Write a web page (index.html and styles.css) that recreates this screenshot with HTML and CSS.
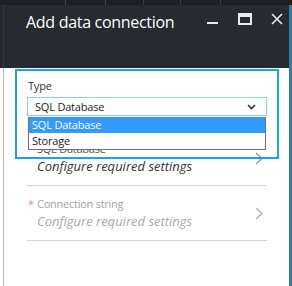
FILE: index.html
```html
<!DOCTYPE html>
<html>
<head>
<meta charset="utf-8">
<link rel="stylesheet" href="styles.css">
</head>
<body>
<div class="screen">
  <div class="topstrip">
    <span class="seg s1"></span><span class="seg s2"></span><span class="seg s3"></span><span class="seg s4"></span><span class="seg s5"></span><span class="seg s6"></span>
  </div>
  <div class="frame">
    <div class="blade">
      <div class="header">
        <div class="title">Add data connection</div>
        <div class="controls">
          <svg class="ctl" width="12" height="12" viewBox="0 0 12 12"><rect x="0" y="9" width="11" height="2" fill="#e8eaec"/></svg>
          <svg class="ctl" width="14" height="12" viewBox="0 0 14 12"><rect x="1" y="1" width="12" height="10" fill="none" stroke="#e8eaec" stroke-width="2"/><rect x="1" y="1" width="12" height="3" fill="#e8eaec"/></svg>
          <svg class="ctl" width="12" height="12" viewBox="0 0 12 12"><path d="M1 1 L11 11 M11 1 L1 11" stroke="#e8eaec" stroke-width="1.6" fill="none"/></svg>
        </div>
      </div>
      <div class="body">
        <div class="content">
          <div class="field">
            <div class="flabel">Type</div>
            <div class="select">
              <span>SQL Database</span>
              <svg width="9" height="6" viewBox="0 0 9 6"><path d="M1 1 L4.5 4.5 L8 1" stroke="#333" stroke-width="1.6" fill="none"/></svg>
            </div>
            <div class="list">
              <div class="opt sel">SQL Database</div>
              <div class="opt">Storage</div>
            </div>
          </div>
          <div class="row first">
            <div class="rtext">
              <div class="rlabel"><span class="ast">*</span>SQL Database</div>
              <div class="rvalue">Configure required settings</div>
            </div>
            <svg class="chev" width="8" height="13" viewBox="0 0 8 13"><path d="M1 1 L7 6.5 L1 12" stroke="#8a8a8a" stroke-width="1.1" fill="none"/></svg>
          </div>
          <div class="row disabled">
            <div class="rtext">
              <div class="rlabel"><span class="ast">*</span>Connection string</div>
              <div class="rvalue">Configure required settings</div>
            </div>
            <svg class="chev" width="8" height="13" viewBox="0 0 8 13"><path d="M1 1 L7 6.5 L1 12" stroke="#a8a8a8" stroke-width="1.1" fill="none"/></svg>
          </div>
        </div>
        <div class="highlight"></div>
      </div>
    </div>
    <div class="edge"></div>
  </div>
</div>
</body>
</html>
```

FILE: styles.css
```css
html, body {
  margin: 0;
  padding: 0;
  background: #ffffff;
}

.screen {
  width: 292px;
  height: 286px;
  display: flex;
  flex-direction: column;
  overflow: hidden;
  font-family: "Open Sans", "Noto Sans", sans-serif;
}

.topstrip {
  height: 5px;
  background: #1c2024;
  display: flex;
}

.seg {
  height: 5px;
  border-right: 1px solid #3b4046;
}
.s1 { width: 65px; }
.s2 { width: 39px; }
.s3 { width: 37px; }
.s4 { width: 36px; }
.s5 { width: 39px; }
.s6 { flex: 1; border-right: none; }

.frame {
  flex: 1;
  display: flex;
}

.blade {
  flex: 1;
  display: flex;
  flex-direction: column;
  position: relative;
}

.edge {
  width: 3px;
  background: #2f7cae;
}

.header {
  height: 63px;
  background: linear-gradient(to right, #262b30 3px, #33393f 3px, #33393f 4px, #262b30 4px);
  display: flex;
  align-items: flex-start;
  justify-content: space-between;
  padding: 5px 6px 0 26px;
  box-sizing: border-box;
}

.title {
  color: #ffffff;
  font-size: 16px;
  line-height: 24px;
  letter-spacing: -0.3px;
}

.controls {
  display: flex;
  align-items: center;
  gap: 19px;
  padding-top: 3px;
}

.ctl {
  display: block;
}

.body {
  flex: 1;
  background: linear-gradient(to right, #ffffff 3px, #b8b8b8 3px, #b8b8b8 4px, #ffffff 4px);
  position: relative;
}

.content {
  padding: 10px 0 0 27px;
  width: 240px;
}

.field {
  position: relative;
}

.flabel {
  font-size: 11px;
  line-height: 16px;
  letter-spacing: -0.2px;
  color: #333333;
  padding-left: 1px;
  margin-bottom: 3px;
}

.select {
  height: 19px;
  border: 1px solid #7fd3f7;
  box-sizing: border-box;
  display: flex;
  align-items: center;
  justify-content: space-between;
  padding: 0 10px 0 7px;
  font-size: 11px;
  letter-spacing: -0.2px;
  color: #222222;
}

.list {
  position: absolute;
  left: 1px;
  top: 39px;
  width: 238px;
  border: 1px solid #6f6f6f;
  border-top: none;
  box-sizing: border-box;
  background: #ffffff;
  z-index: 3;
  font-size: 11px;
  letter-spacing: -0.2px;
  line-height: 16px;
}

.opt {
  padding-left: 3px;
  color: #222222;
}

.opt.sel {
  background: #3399ff;
  color: #ffffff;
}

.row {
  height: 55px;
  border-bottom: 1px solid #d4d4d4;
  box-sizing: border-box;
  display: flex;
  align-items: center;
  justify-content: space-between;
  padding-right: 4px;
}

.row.first {
  margin-top: 15px;
}

.rtext {
  padding-left: 1px;
}

.rlabel {
  font-size: 11px;
  line-height: 16px;
  letter-spacing: -0.25px;
  color: #555555;
}

.ast {
  color: #e0383b;
  display: inline-block;
  width: 9px;
}

.rvalue {
  font-size: 13px;
  line-height: 18px;
  font-style: italic;
  color: #333333;
  padding-left: 9px;
}

.disabled .rlabel { color: #a2a2a2; }
.disabled .rvalue { color: #a8a8a8; }
.disabled .ast { color: #f08a8c; }

.chev {
  display: block;
}

.highlight {
  position: absolute;
  left: 15px;
  top: 1px;
  width: 264px;
  height: 90px;
  border: 2px solid #1aa3e8;
  box-sizing: border-box;
  z-index: 4;
  pointer-events: none;
}
```
